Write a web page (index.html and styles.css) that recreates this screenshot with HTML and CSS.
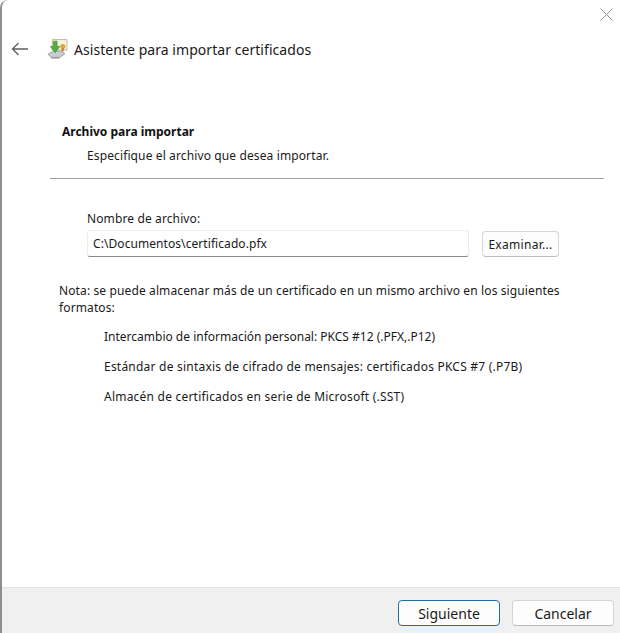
FILE: index.html
```html
<!DOCTYPE html>
<html lang="es">
<head>
<meta charset="utf-8">
<title>Asistente para importar certificados</title>
<link rel="stylesheet" href="styles.css">
</head>
<body>
<div class="window">
  <div class="close-row">
    <svg class="close" width="13" height="13" viewBox="0 0 13 13"><path d="M.5.5l12 12M12.5.5l-12 12" stroke="#8f8f8f" stroke-width="1" fill="none"/></svg>
  </div>
  <header class="title-row">
    <svg class="back" width="18" height="14" viewBox="0 0 18 14"><path d="M17 7H1.5M7.5 1l-6 6 6 6" stroke="#5f5f5f" stroke-width="1.3" fill="none"/></svg>
    <svg class="wizard" width="21" height="21" viewBox="0 0 20 20">
      <path d="M5 1.5h14v10H5z" fill="#f6f3df" stroke="#b5b29a" stroke-width=".8"/>
      <circle cx="15" cy="8" r="2.4" fill="#d9a63a"/>
      <path d="M14 9.5h2v3h-2z" fill="#c9802d"/>
      <path d="M1 15.5l5-3h8l3 2.5-5 3.5H4z" fill="#c9ccd0" stroke="#7f858c" stroke-width=".7"/>
      <path d="M4 18.5h8v1H4z" fill="#8c9197"/>
      <path d="M6 3h3.6v5h2.6l-4.4 6-4.6-6H6z" fill="#4fae3c" stroke="#2f8a2a" stroke-width=".5"/>
    </svg>
    <h1 class="title">Asistente para importar certificados</h1>
  </header>
  <main class="content">
    <h2 class="section-title">Archivo para importar</h2>
    <p class="section-sub">Especifique el archivo que desea importar.</p>
    <hr class="rule">
    <label class="field-label" for="file">Nombre de archivo:</label>
    <div class="field-row">
      <input class="field" id="file" type="text" value="C:\Documentos\certificado.pfx">
      <button class="btn browse" type="button">Examinar...</button>
    </div>
    <p class="note">Nota: se puede almacenar más de un certificado en un mismo archivo en los siguientes formatos:</p>
    <ul class="formats">
      <li class="tight">Intercambio de información personal: PKCS #12 (.PFX,.P12)</li>
      <li>Estándar de sintaxis de cifrado de mensajes: certificados PKCS #7 (.P7B)</li>
      <li>Almacén de certificados en serie de Microsoft (.SST)</li>
    </ul>
  </main>
  <footer class="footer">
    <button class="btn action primary" type="button">Siguiente</button>
    <button class="btn action" type="button">Cancelar</button>
  </footer>
</div>
</body>
</html>
```
FILE: styles.css
```css
* { box-sizing: border-box; }
html, body { margin: 0; padding: 0; background: #fff; }
body { font-family: "Noto Sans", "Open Sans", sans-serif; font-size: 12px; letter-spacing: .12px; color: #1a1a1a; }
.window {
  width: 620px;
  height: 633px;
  display: flex;
  flex-direction: column;
  border-left: 2px solid #8e8e8e;
  border-top-left-radius: 8px;
  overflow: hidden;
}
.close-row { height: 20px; padding: 8px 7px 0 0; display: flex; justify-content: flex-end; flex: none; }
.close { display: block; }
.title-row { height: 58px; display: flex; align-items: center; padding-left: 9px; flex: none; }
.back { flex: none; margin-right: 18px; }
.wizard { flex: none; margin-right: 6px; margin-top: -1px; }
.title { margin: 0; padding-top: 1px; font-size: 14px; font-weight: 400; line-height: 20px; letter-spacing: .05px; color: #1a1a1a; }
.content { flex: 1; padding: 45px 0 0 48px; min-height: 0; }
.section-title { margin: 0 0 0 12px; font-size: 12px; font-weight: 700; line-height: 17px; letter-spacing: 0; color: #111; }
.section-sub { margin: 7px 0 0 37px; line-height: 17px; }
.rule { margin: 14px 16px 0 0; border: 0; height: 1px; background: #a0a0a0; }
.field-label { display: block; margin: 31px 0 0 37px; line-height: 17px; }
.field-row { display: flex; align-items: flex-end; margin: 3px 0 0 37px; }
.field {
  width: 382px;
  height: 27px;
  padding: 0 5px;
  border: 1px solid #ececec;
  border-bottom: 1px solid #8a8a8a;
  border-radius: 3px;
  background: #fff;
  font: 12px "Noto Sans", "Open Sans", sans-serif;
  letter-spacing: .07px;
  color: #1a1a1a;
  outline: 0;
}
.btn {
  height: 26px;
  padding: 0;
  border: 1px solid #d5d5d5;
  border-bottom-color: #bdbdbd;
  border-radius: 4px;
  background: #fdfdfd;
  font: 12px "Noto Sans", "Open Sans", sans-serif;
  letter-spacing: .3px;
  color: #1a1a1a;
}
.browse { width: 77px; margin-left: 13px; }
.note { margin: 25px 16px 0 9px; line-height: 17px; }
.formats { list-style: none; margin: 12px 0 0 54px; padding: 0; letter-spacing: .22px; }
.formats li { line-height: 17px; margin-bottom: 13px; }
.formats .tight { letter-spacing: 0; }
.footer {
  height: 46px;
  flex: none;
  display: flex;
  justify-content: flex-end;
  gap: 12px;
  padding: 12px 6px 0 0;
  background: #f0f0f0;
  border-top: 1px solid #e2e2e2;
}
.action { width: 102px; font-size: 14px; letter-spacing: 0; }
.primary { border: 1px solid #1f6f9e; }
```
